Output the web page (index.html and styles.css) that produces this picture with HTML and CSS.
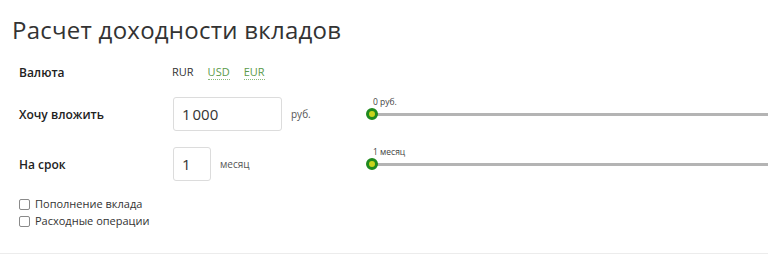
FILE: index.html
```html
<!DOCTYPE html>
<html lang="ru">
<head>
<meta charset="utf-8">
<title>Расчет доходности вкладов</title>
<link rel="stylesheet" href="styles.css">
</head>
<body>
<div class="calc">
  <h1 class="title">Расчет доходности вкладов</h1>
  <div class="row row-currency">
    <div class="label">Валюта</div>
    <div class="currencies">
      <span class="cur cur-active">RUR</span>
      <a class="cur cur-link" href="#">USD</a>
      <a class="cur cur-link" href="#">EUR</a>
    </div>
  </div>
  <div class="row row-amount">
    <div class="label">Хочу вложить</div>
    <div class="field">
      <input class="input input-wide" type="text" value="1&#8239;000">
      <span class="unit">руб.</span>
    </div>
    <div class="slider">
      <span class="slider-value">0 руб.</span>
      <div class="track"></div>
      <span class="handle"></span>
    </div>
  </div>
  <div class="row row-term">
    <div class="label">На срок</div>
    <div class="field">
      <input class="input input-narrow" type="text" value="1">
      <span class="unit unit-term">месяц</span>
    </div>
    <div class="slider">
      <span class="slider-value">1 месяц</span>
      <div class="track"></div>
      <span class="handle"></span>
    </div>
  </div>
  <div class="checks">
    <label class="check"><span class="box"></span>Пополнение вклада</label>
    <label class="check"><span class="box"></span>Расходные операции</label>
  </div>
</div>
<div class="divider"></div>
</body>
</html>
```
FILE: styles.css
```css
html, body {
  margin: 0;
  padding: 0;
  background: #fff;
}
body {
  font-family: "Open Sans", "Noto Sans", sans-serif;
  color: #333;
  width: 768px;
  height: 263px;
  overflow: hidden;
}
.calc {
  height: 253px;
  box-sizing: border-box;
}
.title {
  margin: 0;
  padding: 13px 0 0 12px;
  height: 48px;
  box-sizing: border-box;
  font-size: 24px;
  line-height: 34px;
  font-weight: 400;
  color: #333;
  letter-spacing: 0.25px;
}
.row {
  display: flex;
  align-items: center;
  padding-left: 19px;
}
.label {
  width: 154px;
  flex: none;
  font-size: 12px;
  font-weight: 600;
  color: #222;
}
.row-currency {
  height: 24px;
  margin-top: 12px;
}
.currencies {
  display: flex;
  gap: 14px;
  font-size: 11px;
  margin-left: -1px;
}
.cur-active {
  color: #333;
}
.cur-link {
  color: #5a9a4a;
  text-decoration: none;
  border-bottom: 1px dotted #8ab87a;
  line-height: 15px;
}
.row-amount {
  height: 34px;
  margin-top: 13px;
}
.row-term {
  height: 34px;
  margin-top: 16px;
}
.field {
  width: 193px;
  flex: none;
  display: flex;
  align-items: center;
}
.input {
  box-sizing: border-box;
  height: 34px;
  border: 1px solid #dcdcdc;
  border-radius: 3px;
  padding: 0 0 0 8px;
  font-family: "Open Sans", "Noto Sans", sans-serif;
  font-size: 15px;
  color: #333;
  background: #fff;
  outline: none;
}
.input-wide {
  width: 109px;
}
.input-narrow {
  width: 38px;
}
.unit {
  margin-left: 9px;
  font-size: 10px;
  color: #555;
}
.slider {
  position: relative;
  flex: 1;
  height: 34px;
  display: flex;
  align-items: center;
}
.track {
  width: 100%;
  height: 3px;
  margin-left: 6px;
  background: #b4b4b4;
}
.handle {
  position: absolute;
  left: 0;
  top: 50%;
  width: 12px;
  height: 12px;
  margin-top: -6px;
  box-sizing: border-box;
  border-radius: 50%;
  background: #c8d41e;
  border: 3px solid #1f8a1f;
}
.slider-value {
  position: absolute;
  left: 7px;
  top: -1px;
  font-size: 8.5px;
  color: #444;
  white-space: nowrap;
}
.checks {
  padding: 17px 0 0 19px;
  display: flex;
  flex-direction: column;
  gap: 5px;
}
.check {
  display: flex;
  align-items: center;
  font-size: 11px;
  color: #333;
  line-height: 12px;
}
.box {
  width: 11px;
  height: 11px;
  box-sizing: border-box;
  border: 1px solid #8a8a8a;
  border-radius: 2px;
  margin-right: 5px;
  background: #fff;
}
.divider {
  height: 1px;
  background: #ececec;
}
```
